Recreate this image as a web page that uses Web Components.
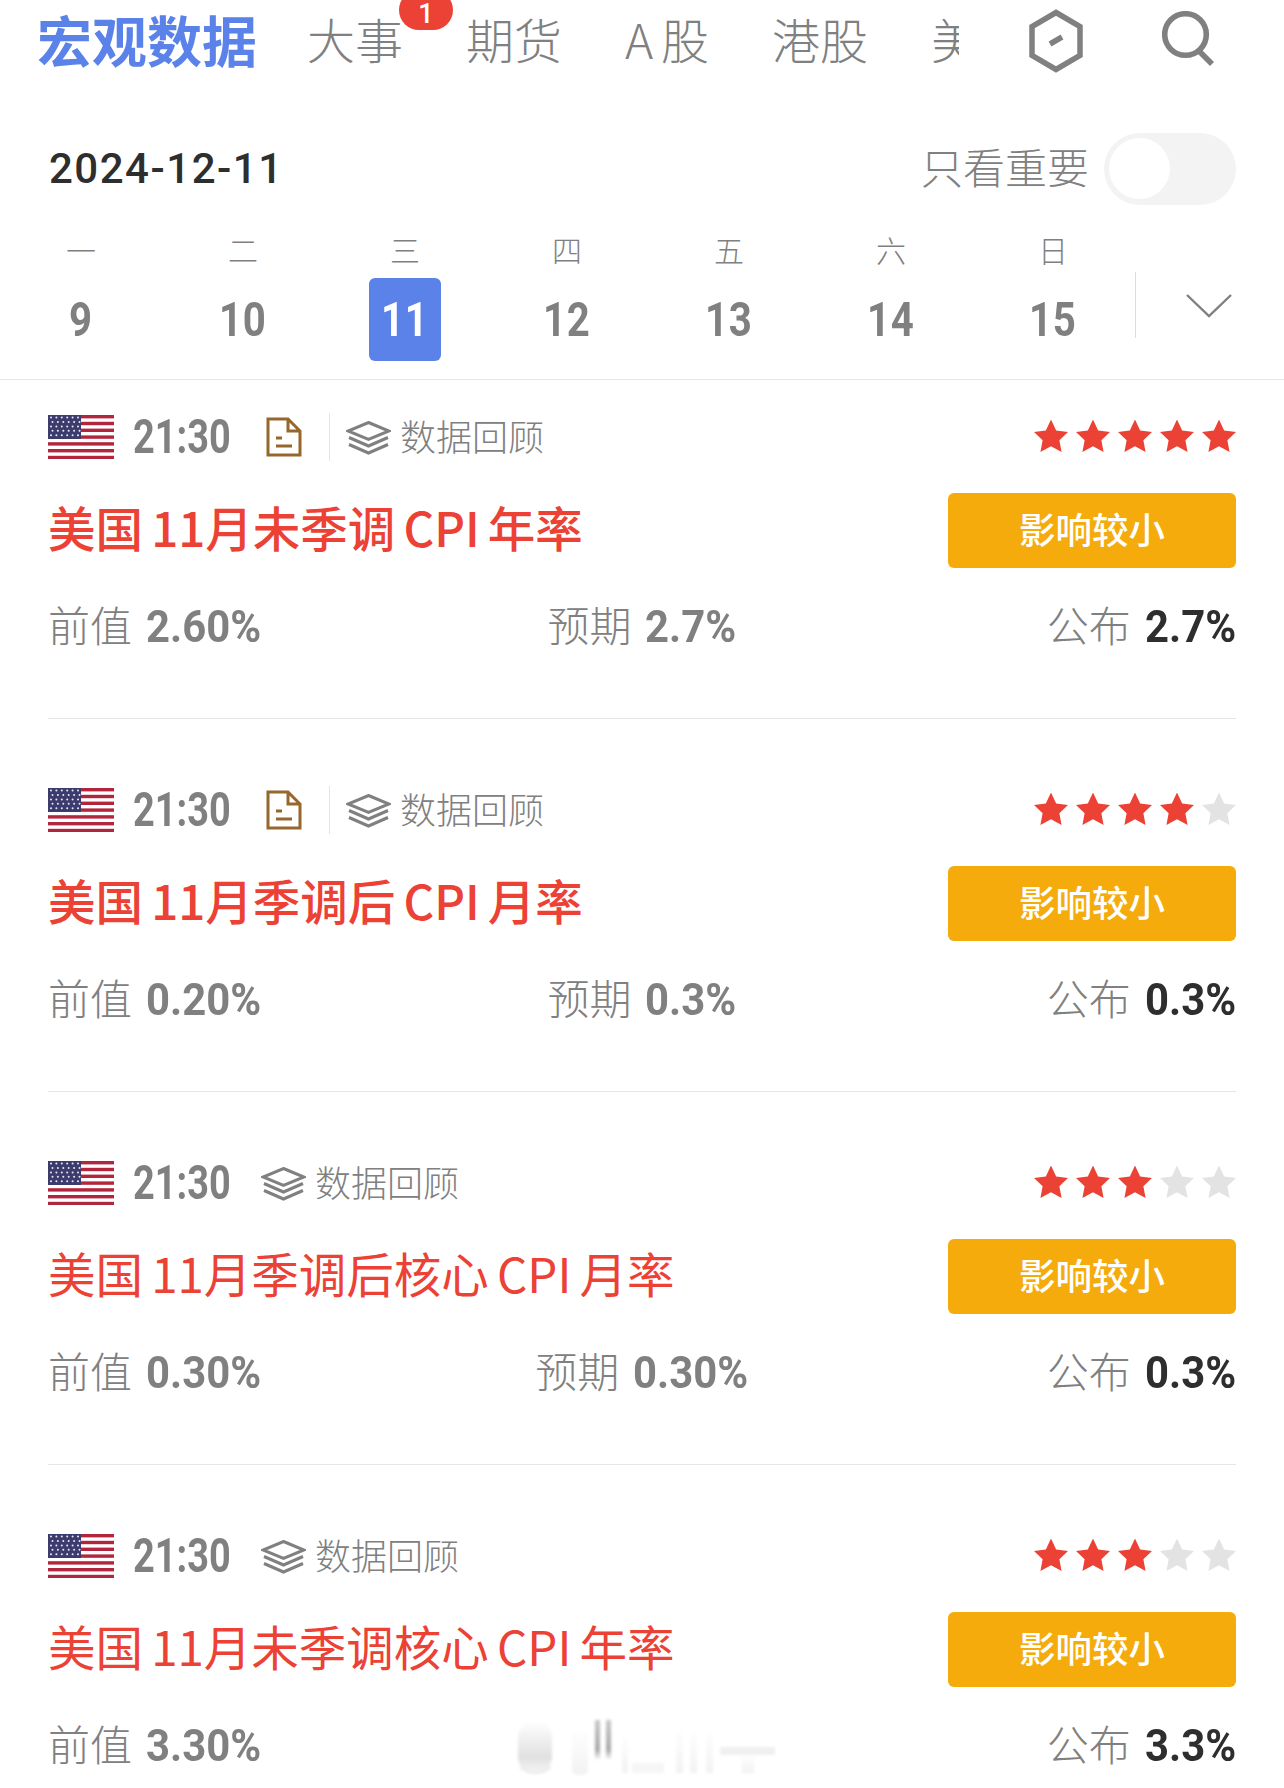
<!DOCTYPE html>
<html>
<head>
<meta charset="utf-8">
<style>
html, body { margin: 0; padding: 0; background: #fff; height: 1788px; overflow: hidden; }
body { font-family: "Noto Sans CJK SC", "Liberation Sans", sans-serif; position: relative; }
</style>
</head>
<body>
<macro-app></macro-app>

<script>
const cjk = '"Noto Sans CJK SC", sans-serif';
const din = '"Roboto", "Noto Sans CJK SC", sans-serif';

// the app's digits are a narrow DIN, so squeeze Roboto and give back the width
class DinNum extends HTMLElement {
    constructor() {
        super();
        this.attachShadow({ mode: 'open' });
        this.shadowRoot.innerHTML = `
            <style>
                :host { display: inline-block; white-space: nowrap; }
                span { display: inline-block; transform-origin: 0 50%; }
            </style>
            <span><slot></slot></span>
        `;
    }

    connectedCallback() {
        const sx = Number(this.getAttribute('sx') || 0.8);
        const inner = this.shadowRoot.querySelector('span');
        inner.style.transform = `scaleX(${sx})`;
        this.style.width = inner.offsetWidth * sx + 'px';
    }
}
customElements.define('din-num', DinNum);

class TopBar extends HTMLElement {
    constructor() {
        super();
        this.attachShadow({ mode: 'open' });
        this.shadowRoot.innerHTML = `
            <style>
                :host { display: flex; align-items: center; height: 84px; box-sizing: border-box; padding: 0 0 9px 37px; font-family: ${cjk}; position: relative; overflow: hidden; }
                .title { font-size: 55px; font-weight: 700; color: #5a82e8; white-space: nowrap; margin-right: 50px; }
                .tabs { width: 652px; display: flex; gap: 63px; overflow: hidden; font-size: 48px; color: #808080; white-space: nowrap; font-weight: 300; word-spacing: -3px; }
                .hex { margin: 7px 0 0 69px; }
                .search { margin: 5px 0 0 78px; }
                svg { display: block; flex: none; }
                .badge { position: absolute; left: 399px; top: -10px; width: 54px; height: 40px; background: #ec4135; border-radius: 20px; color: #fff; font: 500 27px/48px "Roboto", sans-serif; text-align: center; }
            </style>
            <div class="title">宏观数据</div>
            <div class="tabs">
                <span>大事</span><span>期货</span><span>A 股</span><span>港股</span><span>美股</span>
            </div>
            <svg class="hex" width="56" height="64" viewBox="0 0 56 64">
                <path d="M28 3.5 L52 17.5 L52 46.5 L28 60.5 L4 46.5 L4 17.5 Z" fill="none" stroke="#808080" stroke-width="5.5"/>
                <path d="M22 35 L34 28" stroke="#808080" stroke-width="5.5" fill="none"/>
            </svg>
            <svg class="search" width="56" height="58" viewBox="0 0 56 58">
                <circle cx="23.5" cy="23.5" r="20.8" fill="none" stroke="#808080" stroke-width="5.6"/>
                <path d="M36 39 L50 53" stroke="#808080" stroke-width="5.6" fill="none"/>
            </svg>
            <div class="badge">1</div>
        `;
    }
}
customElements.define('top-bar', TopBar);

class DateRow extends HTMLElement {
    constructor() {
        super();
        this.attachShadow({ mode: 'open' });
        this.shadowRoot.innerHTML = `
            <style>
                :host { display: flex; align-items: center; justify-content: space-between; height: 74px; margin-top: 48px; padding: 0 48px 0 49px; font-family: ${cjk}; }
                .date { font: 500 42px/74px "Roboto", sans-serif; color: #2e2e2e; letter-spacing: 1.5px; }
                .right { display: flex; align-items: center; gap: 15px; }
                .label { font-size: 42px; font-weight: 300; color: #808080; margin-bottom: 7px; }
                .toggle { width: 132px; height: 72px; border-radius: 36px; background: #f3f3f3; position: relative; }
                .knob { position: absolute; left: 5px; top: 5px; width: 61px; height: 61px; border-radius: 50%; background: #fff; }
            </style>
            <div class="date">2024-12-11</div>
            <div class="right">
                <span class="label">只看重要</span>
                <div class="toggle"><div class="knob"></div></div>
            </div>
        `;
    }
}
customElements.define('date-row', DateRow);

class WeekStrip extends HTMLElement {
    constructor() {
        super();
        this.attachShadow({ mode: 'open' });
        const names = ['一', '二', '三', '四', '五', '六', '日'];
        const days = [9, 10, 11, 12, 13, 14, 15];
        const cols = names.map((n, i) => `
            <div class="col">
                <div class="name">${n}</div>
                <div class="num ${days[i] === 11 ? 'on' : ''}"><din-num sx="0.82">${days[i]}</din-num></div>
            </div>`).join('');
        this.shadowRoot.innerHTML = `
            <style>
                :host { display: flex; height: 159px; margin-top: 14px; border-bottom: 1px solid #e6e6e6; position: relative; font-family: ${cjk}; }
                .col { width: 162px; display: flex; flex-direction: column; align-items: center; }
                .name { font-size: 30px; font-weight: 300; color: #808080; height: 36px; line-height: 36px; margin-top: 11px; }
                .num { width: 72px; height: 83px; margin-top: 11px; text-align: center; border-radius: 6px; font: 700 49px/83px ${din}; color: #808080; letter-spacing: 1px; }
                .num.on { background: #5a82e8; color: #fff; }
                .sep { position: absolute; left: 1135px; top: 52px; width: 1px; height: 66px; background: #dcdcdc; }
                .chev { position: absolute; left: 1186px; top: 73px; }
            </style>
            ${cols}
            <div class="sep"></div>
            <svg class="chev" width="46" height="26" viewBox="0 0 46 26"><path d="M1 2 L23 23 L45 2" fill="none" stroke="#808080" stroke-width="2.4"/></svg>
        `;
    }
}
customElements.define('week-strip', WeekStrip);

class UsFlag extends HTMLElement {
    constructor() {
        super();
        this.attachShadow({ mode: 'open' });
        let stripes = '';
        for (let i = 0; i < 7; i++) {
            stripes += `<rect x="0" y="${i * 6.8}" width="66" height="3.4" fill="#b1263c"/>`;
        }
        let dots = '';
        for (let r = 0; r < 5; r++) {
            for (let c = 0; c < 6; c++) {
                dots += `<circle cx="${3 + c * 5.4 + (r % 2 ? 1.5 : 0)}" cy="${2.6 + r * 4.4}" r="1" fill="#e9e9f4"/>`;
            }
        }
        this.shadowRoot.innerHTML = `
            <style>
                :host { display: block; width: 66px; height: 44px; }
                svg { display: block; }
            </style>
            <svg width="66" height="44" viewBox="0 0 66 44">
                <rect width="66" height="44" fill="#fff"/>
                ${stripes}
                <rect x="0" y="0" width="33" height="24" fill="#3c3b6e"/>
                ${dots}
            </svg>
        `;
    }
}
customElements.define('us-flag', UsFlag);

class StarRating extends HTMLElement {
    constructor() {
        super();
        this.attachShadow({ mode: 'open' });
        const n = Number(this.getAttribute('value'));
        const pts = [];
        for (let i = 0; i < 10; i++) {
            const r = i % 2 ? 8.8 : 18;
            const t = -Math.PI / 2 + i * Math.PI / 5;
            pts.push((17 + r * Math.cos(t)).toFixed(2) + ',' + (17.5 + r * Math.sin(t)).toFixed(2));
        }
        let stars = '';
        for (let i = 0; i < 5; i++) {
            stars += `<svg width="34" height="33" viewBox="0 0 34 33"><polygon points="${pts.join(' ')}" fill="${i < n ? '#ec4135' : '#e3e3e3'}"/></svg>`;
        }
        this.shadowRoot.innerHTML = `
            <style>
                :host { display: flex; gap: 8px; margin-bottom: 2px; }
                svg { display: block; }
            </style>
            ${stars}
        `;
    }
}
customElements.define('star-rating', StarRating);

class EventCard extends HTMLElement {
    constructor() {
        super();
        this.attachShadow({ mode: 'open' });
        const a = name => this.getAttribute(name);
        const doc = a('doc') !== null ? `
            <svg class="doc" width="36" height="40" viewBox="0 0 36 40">
                <path d="M2 2 H22 L34 14 V38 H2 Z M22 2 V14 H34 M10 21 H16 M10 29 H26" fill="none" stroke="#96662c" stroke-width="3"/>
            </svg>
            <div class="sep"></div>` : '';
        const forecast = a('forecast');
        this.shadowRoot.innerHTML = `
            <style>
                :host { display: block; margin: 0 48px; padding: ${a('first') !== null ? 25 : 59}px 0 75px; border-bottom: 1px solid #e6e6e6; font-family: ${cjk}; }
                .top { display: flex; align-items: center; height: 64px; }
                .time { font: 700 48px/64px ${din}; color: #808080; margin-left: 19px; }
                .doc { margin-left: 35px; }
                .sep { width: 1px; height: 48px; background: #e4e4e4; margin-left: 27px; margin-right: -14px; }
                .review { display: flex; align-items: center; gap: 9px; margin-left: 30px; font-size: 36px; font-weight: 300; color: #808080; }
                .review svg { margin-top: 2px; }
                .review span { margin-bottom: 5px; }
                star-rating { margin-left: auto; }
                .mid { display: flex; align-items: center; justify-content: space-between; height: 75px; margin-top: 24px; }
                .name { font-size: 47.5px; word-spacing: -2.5px; color: #ec4135; font-weight: ${a('bold') !== null ? 500 : 400}; white-space: nowrap; padding-bottom: 8px; }
                .btn { width: 288px; height: 75px; line-height: 71px; background: #f5ab0c; color: #fff; border-radius: 6px; text-align: center; font-size: 36.5px; font-weight: 500; }
                .vals { display: grid; grid-template-columns: 1fr 1fr 1fr; height: 50px; margin-top: 25px; align-items: center; font-size: 42px; font-weight: 300; color: #808080; white-space: nowrap; }
                din-num { font: 700 45px/50px ${din}; margin-left: 14px; }
                .time din-num { font: inherit; margin-left: 0; }
                .c { text-align: center; }
                .r { text-align: right; }
                .r din-num { color: #2e2e2e; }
            </style>
            <div class="top">
                <us-flag></us-flag>
                <span class="time"><din-num sx="0.79">21:30</din-num></span>
                ${doc}
                <span class="review">
                    <svg width="45" height="34" viewBox="0 0 45 34">
                        <path d="M22.5 1.5 L43 10 L22.5 18.5 L2 10 Z" fill="none" stroke="#808080" stroke-width="3"/>
                        <path d="M3 16.5 L22.5 25 L42 16.5 M3 23.5 L22.5 32 L42 23.5" fill="none" stroke="#808080" stroke-width="3"/>
                    </svg>
                    <span>数据回顾</span>
                </span>
                <star-rating value="${a('stars')}"></star-rating>
            </div>
            <div class="mid">
                <div class="name">${a('name')}</div>
                <div class="btn">影响较小</div>
            </div>
            <div class="vals">
                <div>前值<din-num sx="0.93">${a('prev')}</din-num></div>
                <div class="c">${forecast ? `预期<din-num sx="0.93">${forecast}</din-num>` : ''}</div>
                <div class="r">公布<din-num sx="0.93">${a('actual')}</din-num></div>
            </div>
        `;
    }
}
customElements.define('event-card', EventCard);

// blurred site watermark that sits over the last row
class WaterMark extends HTMLElement {
    constructor() {
        super();
        this.attachShadow({ mode: 'open' });
        this.shadowRoot.innerHTML = `
            <style>
                :host { display: block; position: absolute; left: 510px; top: 1715px; width: 270px; height: 70px; }
                svg { display: block; }
            </style>
            <svg width="270" height="70" viewBox="0 0 270 70">
                <defs>
                    <linearGradient id="a" x1="0" y1="0" x2="0" y2="1">
                        <stop offset="0" stop-color="#fff"/>
                        <stop offset="0.7" stop-color="#e0e0e0"/>
                        <stop offset="1" stop-color="#f6f6f6"/>
                    </linearGradient>
                    <linearGradient id="b" x1="0" y1="0" x2="0" y2="1">
                        <stop offset="0" stop-color="#c8c8c8"/>
                        <stop offset="0.75" stop-color="#a8a8a8"/>
                        <stop offset="1" stop-color="#fff"/>
                    </linearGradient>
                    <linearGradient id="c" x1="0" y1="0" x2="0" y2="1">
                        <stop offset="0" stop-color="#fff"/>
                        <stop offset="1" stop-color="#f2f2f2"/>
                    </linearGradient>
                    <filter id="f"><feGaussianBlur stdDeviation="1.6"/></filter>
                </defs>
                <g filter="url(#f)">
                    <rect x="8" y="6" width="34" height="52" rx="16" fill="url(#a)"/>
                    <path d="M10 52 Q25 64 41 52" fill="none" stroke="#e8e8e8" stroke-width="2"/>
                    <rect x="62" y="12" width="16" height="48" rx="6" fill="url(#c)"/>
                    <rect x="85" y="5" width="5" height="40" fill="url(#b)"/>
                    <rect x="96" y="5" width="5" height="40" fill="url(#b)"/>
                    <rect x="112" y="20" width="6" height="38" fill="url(#c)"/>
                    <rect x="122" y="48" width="32" height="10" fill="#f6f6f6"/>
                    <rect x="166" y="14" width="7" height="44" fill="url(#c)"/>
                    <rect x="180" y="14" width="7" height="44" fill="url(#c)"/>
                    <rect x="196" y="14" width="7" height="44" fill="url(#c)"/>
                    <rect x="210" y="32" width="55" height="8" fill="#f0f0f0"/>
                    <rect x="232" y="40" width="12" height="18" fill="url(#c)"/>
                </g>
            </svg>
        `;
    }
}
customElements.define('water-mark', WaterMark);

class MacroApp extends HTMLElement {
    constructor() {
        super();
        this.attachShadow({ mode: 'open' });
        this.shadowRoot.innerHTML = `
            <style>
                :host { display: block; width: 1284px; height: 1788px; overflow: hidden; position: relative; background: #fff; }
            </style>
            <top-bar></top-bar>
            <date-row></date-row>
            <week-strip></week-strip>
            <event-card first doc bold stars="5" name="美国 11月未季调 CPI 年率" prev="2.60%" forecast="2.7%" actual="2.7%"></event-card>
            <event-card doc bold stars="4" name="美国 11月季调后 CPI 月率" prev="0.20%" forecast="0.3%" actual="0.3%"></event-card>
            <event-card stars="3" name="美国 11月季调后核心 CPI 月率" prev="0.30%" forecast="0.30%" actual="0.3%"></event-card>
            <event-card stars="3" name="美国 11月未季调核心 CPI 年率" prev="3.30%" actual="3.3%"></event-card>
            <water-mark></water-mark>
        `;
    }
}
customElements.define('macro-app', MacroApp);
</script>
</body>
</html>
